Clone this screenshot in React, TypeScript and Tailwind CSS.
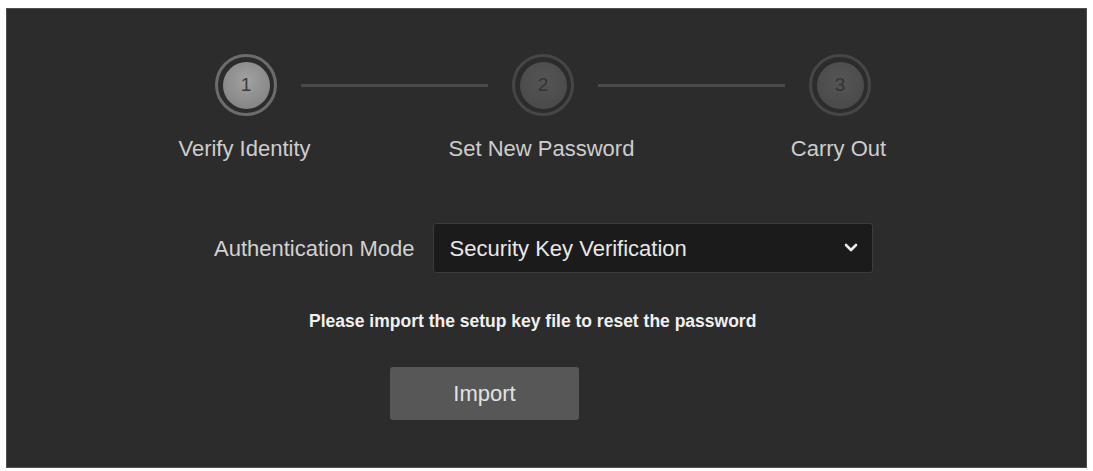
import React from "react";

const steps = [
  { n: 1, label: "Verify Identity", active: true },
  { n: 2, label: "Set New Password", active: false },
  { n: 3, label: "Carry Out", active: false },
];

function StepCircle({ n, active }: { n: number; active: boolean }) {
  return (
    <div
      className={
        "flex h-[62px] w-[62px] shrink-0 items-center justify-center rounded-full border-[3px] " +
        (active ? "border-[#6c6c6c]" : "border-[#464646]")
      }
    >
      <div
        className={
          "flex h-[47px] w-[47px] items-center justify-center rounded-full text-[19px] " +
          (active
            ? "bg-[radial-gradient(circle_at_50%_40%,#a2a2a2,#7c7c7c)] text-[#3c3c3c]"
            : "bg-[radial-gradient(circle_at_50%_40%,#555555,#474747)] text-[#333333]")
        }
      >
        {n}
      </div>
    </div>
  );
}

export default function App() {
  return (
    <main className="min-h-screen bg-white pl-[6px] pt-[8px] font-['Liberation_Sans',Arial,sans-serif]">
      <div className="h-[460px] w-[1081px] border border-[#505050] bg-[#2c2c2c]">
        {/* circles + lines */}
        <div className="flex items-center pl-[208px] pt-[45px]">
          {steps.map((s, i) => (
            <React.Fragment key={s.n}>
              <StepCircle n={s.n} active={s.active} />
              {i < steps.length - 1 && (
                <div className="mx-[24px] h-[3px] w-[187px] bg-[#4a4a4a]" />
              )}
            </React.Fragment>
          ))}
        </div>

        {/* labels */}
        <div className="mt-[20px] grid grid-cols-[297px_297px_297px] pl-[89px]">
          {steps.map((s) => (
            <div key={s.n} className="text-center text-[22px] leading-[26px] text-[#cdcdcd]">
              {s.label}
            </div>
          ))}
        </div>

        {/* auth mode */}
        <div className="mt-[61px] flex items-center pl-[207px]">
          <span className="text-[22px] text-[#d2d2d2]">Authentication Mode</span>
          <div className="ml-[18px] flex h-[50px] w-[440px] items-center justify-between rounded-[3px] border border-[#3c3c3c] bg-[#1b1b1b] pl-[16px] pr-[14px]">
            <span className="text-[22px] text-[#e8e8e8]">Security Key Verification</span>
            <svg width="14" height="10" viewBox="0 0 14 10">
              <polyline
                points="2,2 7,7 12,2"
                fill="none"
                stroke="#ededed"
                strokeWidth="2.6"
                strokeLinecap="round"
                strokeLinejoin="round"
              />
            </svg>
          </div>
        </div>

        {/* hint */}
        <p className="mt-[38px] pl-[302px] text-[17.5px] font-bold leading-[20px] text-[#f0f0f0]">
          Please import the setup key file to reset the password
        </p>

        {/* import button */}
        <div className="mt-[36px] pl-[383px]">
          <button className="h-[53px] w-[189px] rounded-[3px] bg-[#575757] text-[22px] text-[#e2e2e2]">
            Import
          </button>
        </div>
      </div>
    </main>
  );
}
